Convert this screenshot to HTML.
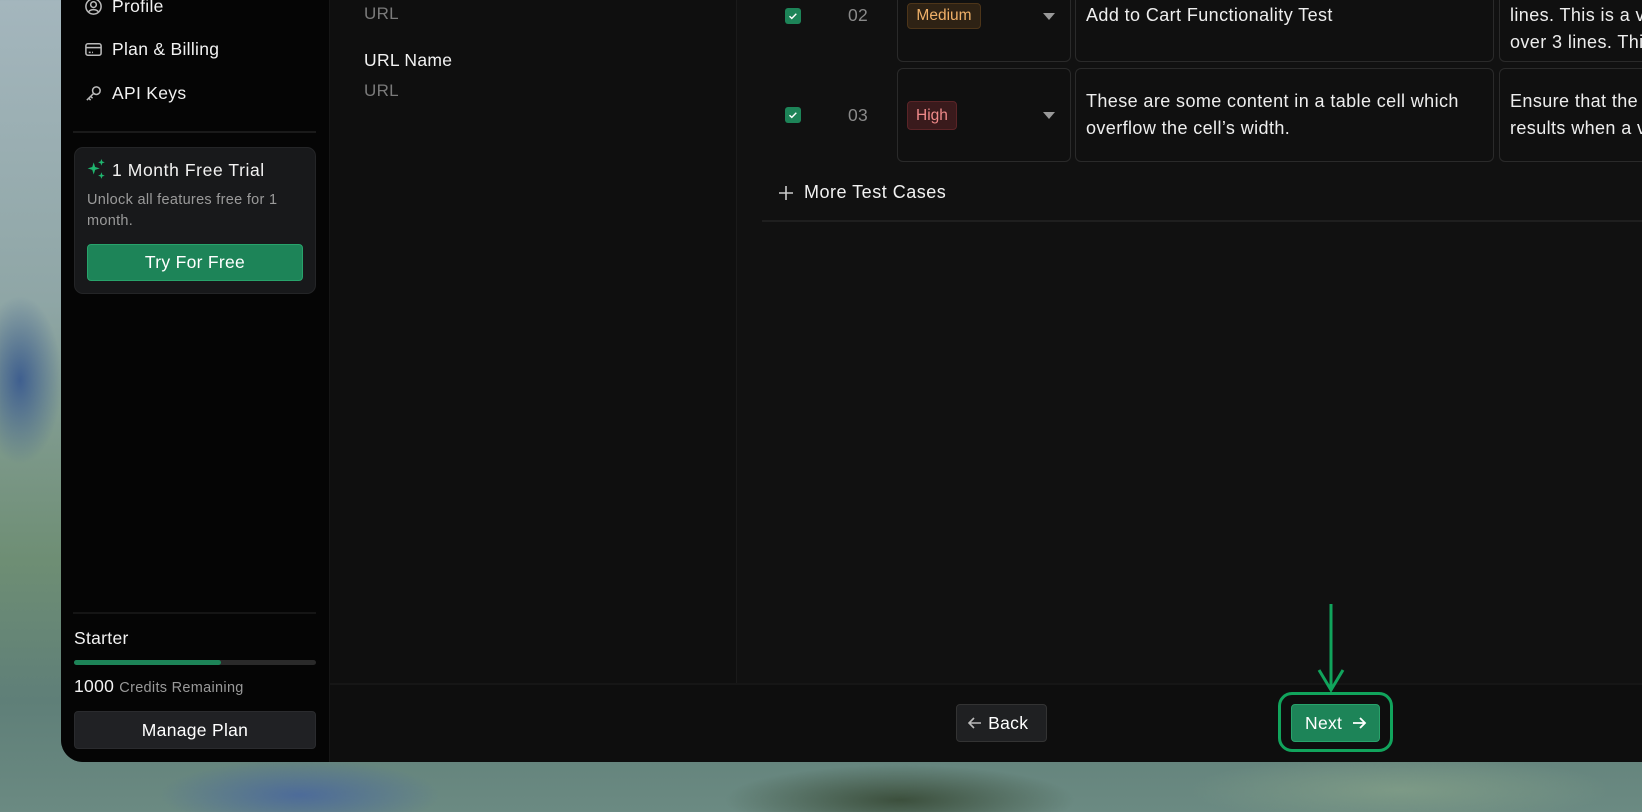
<!DOCTYPE html>
<html><head><meta charset="utf-8"><style>
*{box-sizing:border-box;margin:0;padding:0}
body{width:1642px;height:812px;overflow:hidden;position:relative;font-family:"Liberation Sans",sans-serif;color:#eee;letter-spacing:0.3px;
background:
radial-gradient(ellipse 60px 120px at 20px 380px,#3f5f8f 0,transparent 70%),
radial-gradient(ellipse 200px 50px at 300px 795px,#4d6b99 0,transparent 70%),
radial-gradient(ellipse 250px 50px at 900px 800px,#3c4f3c 0,transparent 70%),
radial-gradient(ellipse 300px 50px at 1400px 790px,#7d9a86 0,transparent 70%),
linear-gradient(180deg,#a4b6bd 0,#8fa6a6 300px,#6e8e74 560px,#5f7f78 700px,#6b8a82 812px)}
.a{position:absolute}
.win{left:61px;top:-20px;width:1600px;height:782px;background:#0e0e0e;border-bottom-left-radius:22px;overflow:hidden}
.side{left:61px;top:0;width:269px;height:762px;background:#050505;border-right:1px solid #161616;border-bottom-left-radius:22px}
.nav{left:84px;font-size:17.5px;color:#f2f2f2;display:flex;align-items:center;gap:9px;height:22px}
.mid{left:330px;top:0;width:407px;height:684px;background:#0f0f0f;border-right:1px solid #1a1a1a}
.right{left:737px;top:0;width:905px;height:684px;background:#111}
.cell{border:1.5px solid #2a2a2a;border-radius:6px;background:#101010}
.txt{font-size:18px;color:#eee;line-height:27px;letter-spacing:0.4px}
</style></head><body>
<div class="a win"></div>
<div class="a side"></div>
<div class="a nav" style="top:-5px"><svg width="19" height="19" viewBox="0 0 20 20" fill="none" stroke="#bbb" stroke-width="1.6"><circle cx="10" cy="10" r="8"/><circle cx="10" cy="8" r="3"/><path d="M5 15.5c2-3 8-3 10 0"/></svg>Profile</div>
<div class="a nav" style="top:38px"><svg width="19" height="19" viewBox="0 0 20 20" fill="none" stroke="#bbb" stroke-width="1.6"><rect x="2" y="4" width="16" height="12" rx="2"/><path d="M2 8h16M5 13h2M8.5 13h1"/></svg>Plan &amp; Billing</div>
<div class="a nav" style="top:82px"><svg width="19" height="19" viewBox="0 0 20 20" fill="none" stroke="#bbb" stroke-width="1.6"><circle cx="13" cy="7" r="4"/><path d="M10 10l-7 7M5 15l2 2M7 13l2 2"/></svg>API Keys</div>
<div class="a" style="left:73px;top:131px;width:243px;height:2px;background:#1a1a1a"></div>
<div class="a" style="left:74px;top:147px;width:242px;height:147px;background:#18191b;border:1px solid #242527;border-radius:9px"></div>
<svg class="a" style="left:87px;top:159px" width="20" height="21" viewBox="0 0 18 19" fill="#1fb66f"><path d="M6 3l1.3 4.2L11.5 8.5 7.3 9.8 6 14 4.7 9.8 0.5 8.5 4.7 7.2z"/><path d="M13 0l.8 2.2 2.2 .8-2.2 .8-.8 2.2-.8-2.2-2.2-.8 2.2-.8z"/><path d="M13 12l.8 2.2 2.2 .8-2.2 .8-.8 2.2-.8-2.2-2.2-.8 2.2-.8z"/></svg>
<div class="a" style="left:112px;top:160px;font-size:17.5px;color:#f2f2f2;letter-spacing:0.6px">1 Month Free Trial</div>
<div class="a" style="left:87px;top:190px;width:220px;font-size:14.5px;line-height:21px;color:#9a9a9a">Unlock all features free for 1 month.</div>
<div class="a" style="left:87px;top:244px;width:216px;height:37px;background:#1d8458;border:1px solid #28a36b;border-radius:4px;font-size:17.5px;color:#fff;text-align:center;line-height:35px">Try For Free</div>
<div class="a" style="left:73px;top:612px;width:243px;height:2px;background:#151515"></div>
<div class="a" style="left:74px;top:628px;font-size:17.5px;color:#f2f2f2">Starter</div>
<div class="a" style="left:74px;top:660px;width:242px;height:5px;background:#2a2a2a;border-radius:3px"><div style="width:147px;height:5px;background:#1d8458;border-radius:3px"></div></div>
<div class="a" style="left:74px;top:676px;font-size:17.5px;color:#f2f2f2">1000 <span style="font-size:14.5px;color:#999">Credits Remaining</span></div>
<div class="a" style="left:74px;top:711px;width:242px;height:38px;background:#202124;border:1px solid #2a2b2e;border-radius:4px;font-size:17.5px;color:#fff;text-align:center;line-height:36px">Manage Plan</div>

<div class="a mid"></div>
<div class="a" style="left:364px;top:4px;font-size:17px;color:#7a7a7a">URL</div>
<div class="a" style="left:364px;top:50px;font-size:17.5px;color:#f2f2f2">URL Name</div>
<div class="a" style="left:364px;top:81px;font-size:17px;color:#7a7a7a">URL</div>

<div class="a right"></div>
<div class="a" style="left:785px;top:8px;width:16px;height:16px;background:#1d8458;border-radius:3px"><svg width="16" height="16" viewBox="0 0 16 16" fill="none" stroke="#fff" stroke-width="1.4"><path d="M4.5 8.2l2.3 2.2 4.5-4.6"/></svg></div>
<div class="a" style="left:848px;top:5px;font-size:17.5px;color:#8a8a8a">02</div>
<div class="a cell" style="left:897px;top:-10px;width:174px;height:72px"></div>
<div class="a" style="left:907px;top:3px;width:74px;height:26px;background:#2e2214;border:1px solid #4d3519;border-radius:4px;font-size:15.5px;color:#f0b169;text-align:center;line-height:24px;letter-spacing:0">Medium</div>
<div class="a" style="left:1043px;top:13px;border-left:6px solid transparent;border-right:6px solid transparent;border-top:7px solid #999"></div>
<div class="a cell" style="left:1075px;top:-10px;width:419px;height:72px"></div>
<div class="a txt" style="left:1086px;top:2px">Add to Cart Functionality Test</div>
<div class="a cell" style="left:1499px;top:-10px;width:160px;height:72px"></div>
<div class="a txt" style="left:1510px;top:2px;white-space:nowrap">lines. This is a ve<br>over 3 lines. Thi</div>
<div class="a" style="left:785px;top:107px;width:16px;height:16px;background:#1d8458;border-radius:3px"><svg width="16" height="16" viewBox="0 0 16 16" fill="none" stroke="#fff" stroke-width="1.4"><path d="M4.5 8.2l2.3 2.2 4.5-4.6"/></svg></div>
<div class="a" style="left:848px;top:105px;font-size:17.5px;color:#8a8a8a">03</div>
<div class="a cell" style="left:897px;top:68px;width:174px;height:94px"></div>
<div class="a" style="left:907px;top:101px;width:50px;height:29px;background:#3a1a1c;border:1px solid #5a2427;border-radius:4px;font-size:15.5px;color:#f08a8a;text-align:center;line-height:27px;letter-spacing:0">High</div>
<div class="a" style="left:1043px;top:112px;border-left:6px solid transparent;border-right:6px solid transparent;border-top:7px solid #999"></div>
<div class="a cell" style="left:1075px;top:68px;width:419px;height:94px"></div>
<div class="a txt" style="left:1086px;top:88px">These are some content in a table cell which<br>overflow the cell’s width.</div>
<div class="a cell" style="left:1499px;top:68px;width:160px;height:94px"></div>
<div class="a txt" style="left:1510px;top:88px;white-space:nowrap">Ensure that the<br>results when a v</div>
<svg class="a" style="left:778px;top:185px" width="16" height="16" viewBox="0 0 16 16" stroke="#ccc" stroke-width="1.6"><path d="M8 1v14M1 8h14"/></svg>
<div class="a" style="left:804px;top:182px;font-size:18px;color:#f2f2f2;letter-spacing:0.5px">More Test Cases</div>
<div class="a" style="left:762px;top:220px;width:880px;height:2px;background:#1f1f1f"></div>

<div class="a" style="left:330px;top:683px;width:1312px;height:2px;background:#161616"></div>
<div class="a" style="left:956px;top:704px;width:91px;height:38px;background:#1f2022;border:1px solid #333;border-radius:4px;font-size:17.5px;color:#fff;line-height:36px;padding-left:10px">
<svg width="16" height="14" viewBox="0 0 16 14" fill="none" stroke="#bbb" stroke-width="1.6" style="vertical-align:-1px"><path d="M14 7H2M7 2L2 7l5 5"/></svg> Back</div>
<div class="a" style="left:1278px;top:692px;width:115px;height:60px;border:3px solid #11a45c;border-radius:14px"></div>
<div class="a" style="left:1291px;top:704px;width:89px;height:38px;background:#1d8458;border:1px solid #28a36b;border-radius:4px;font-size:17.5px;color:#fff;line-height:36px;padding-left:13px">Next <svg width="16" height="14" viewBox="0 0 16 14" fill="none" stroke="#fff" stroke-width="1.8" style="vertical-align:-1px;margin-left:4px"><path d="M2 7h12M9 2l5 5-5 5"/></svg></div>
<svg class="a" style="left:1312px;top:604px" width="40" height="90" viewBox="0 0 40 90" fill="none" stroke="#11a45c" stroke-width="3"><path d="M19 0v86M7 66l12 20 12-20"/></svg>
</body></html>
